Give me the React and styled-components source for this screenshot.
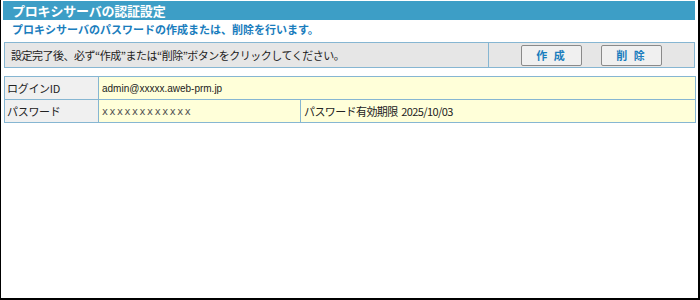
import styled, { createGlobalStyle } from "styled-components";

const Global = createGlobalStyle`
  html, body { margin: 0; padding: 0; background: #fff; }
  body { font-family: "Noto Sans CJK JP", "Liberation Sans", sans-serif; }
`;

export default function App() {
  return (
    <>
      <Global />
      <Frame>
        <TitleBar>プロキシサーバの認証設定</TitleBar>
        <Lead>プロキシサーバのパスワードの作成または、削除を行います。</Lead>
        <Notice>
          <NoticeText>設定完了後、必ず“作成”または“削除”ボタンをクリックしてください。</NoticeText>
          <Actions>
            <ActionButton>作 成</ActionButton>
            <ActionButton>削 除</ActionButton>
          </Actions>
        </Notice>
        <InfoTable>
          <tbody>
            <tr>
              <Label>ログインID</Label>
              <Value colSpan={2} $small>admin@xxxxx.aweb-prm.jp</Value>
            </tr>
            <tr>
              <Label>パスワード</Label>
              <Value $small $masked>xxxxxxxxxxxx</Value>
              <Value>パスワード有効期限&nbsp; 2025/10/03</Value>
            </tr>
          </tbody>
        </InfoTable>
      </Frame>
    </>
  );
}

const Frame = styled.div`
  box-sizing: border-box;
  width: 700px;
  height: 300px;
  border-left: 1px solid #000;
  border-right: 2px solid #000;
  border-bottom: 2px solid #000;
  padding: 1px 3px 0 2px;
  display: flex;
  flex-direction: column;
`;

const TitleBar = styled.div`
  height: 19px;
  background: #3d9ec6;
  color: #fff;
  font-size: 13px;
  font-weight: bold;
  line-height: 19px;
  padding-left: 9px;
  letter-spacing: -0.2px;
`;

const Lead = styled.div`
  color: #1a7dbd;
  font-size: 11px;
  font-weight: bold;
  line-height: 16px;
  padding: 1px 0 0 9px;
  height: 21px;
`;

const Notice = styled.div`
  box-sizing: border-box;
  margin-left: 1px;
  height: 26px;
  display: flex;
  background: #e6e6e6;
  border: 1px solid #86b6d2;
`;

const NoticeText = styled.div`
  flex: 1;
  font-size: 11px;
  color: #222;
  line-height: 24px;
  padding-left: 6px;
  letter-spacing: -0.5px;
  border-right: 1px solid #86b6d2;
`;

const Actions = styled.div`
  width: 205px;
  display: flex;
  align-items: center;
  justify-content: center;
  gap: 19px;
`;

const ActionButton = styled.button`
  box-sizing: border-box;
  width: 61px;
  height: 21px;
  padding: 0;
  background: #f0f0f0;
  border: 1px solid #8a8a8a;
  border-radius: 2px;
  color: #1a7dbd;
  font-family: inherit;
  font-size: 11px;
  font-weight: bold;
  letter-spacing: 2px;
`;

const InfoTable = styled.table`
  margin: 8px 0 0 1px;
  width: 692px;
  border-collapse: collapse;
  font-size: 11px;
  color: #222;
  td {
    border: 1px solid #86b6d2;
    height: 22px;
    padding: 0 3px;
  }
`;

const Label = styled.td`
  width: 88px;
  background: #f0f0f0;
  padding-left: 2px !important;
  letter-spacing: -0.3px;
`;

const Value = styled.td`
  background: #ffffd9;
  font-size: ${(p) => (p.$small ? "10px" : "11px")};
  color: ${(p) => (p.$masked ? "#555" : "#222")};
  font-family: ${(p) =>
    p.$masked ? '"DejaVu Sans", sans-serif' : p.$small ? '"Liberation Sans", sans-serif' : "inherit"};
  letter-spacing: ${(p) => (p.$masked ? "1.6px" : p.$small ? "0" : "-0.6px")};
  &:nth-child(2) {
    width: 195px;
  }
`;
